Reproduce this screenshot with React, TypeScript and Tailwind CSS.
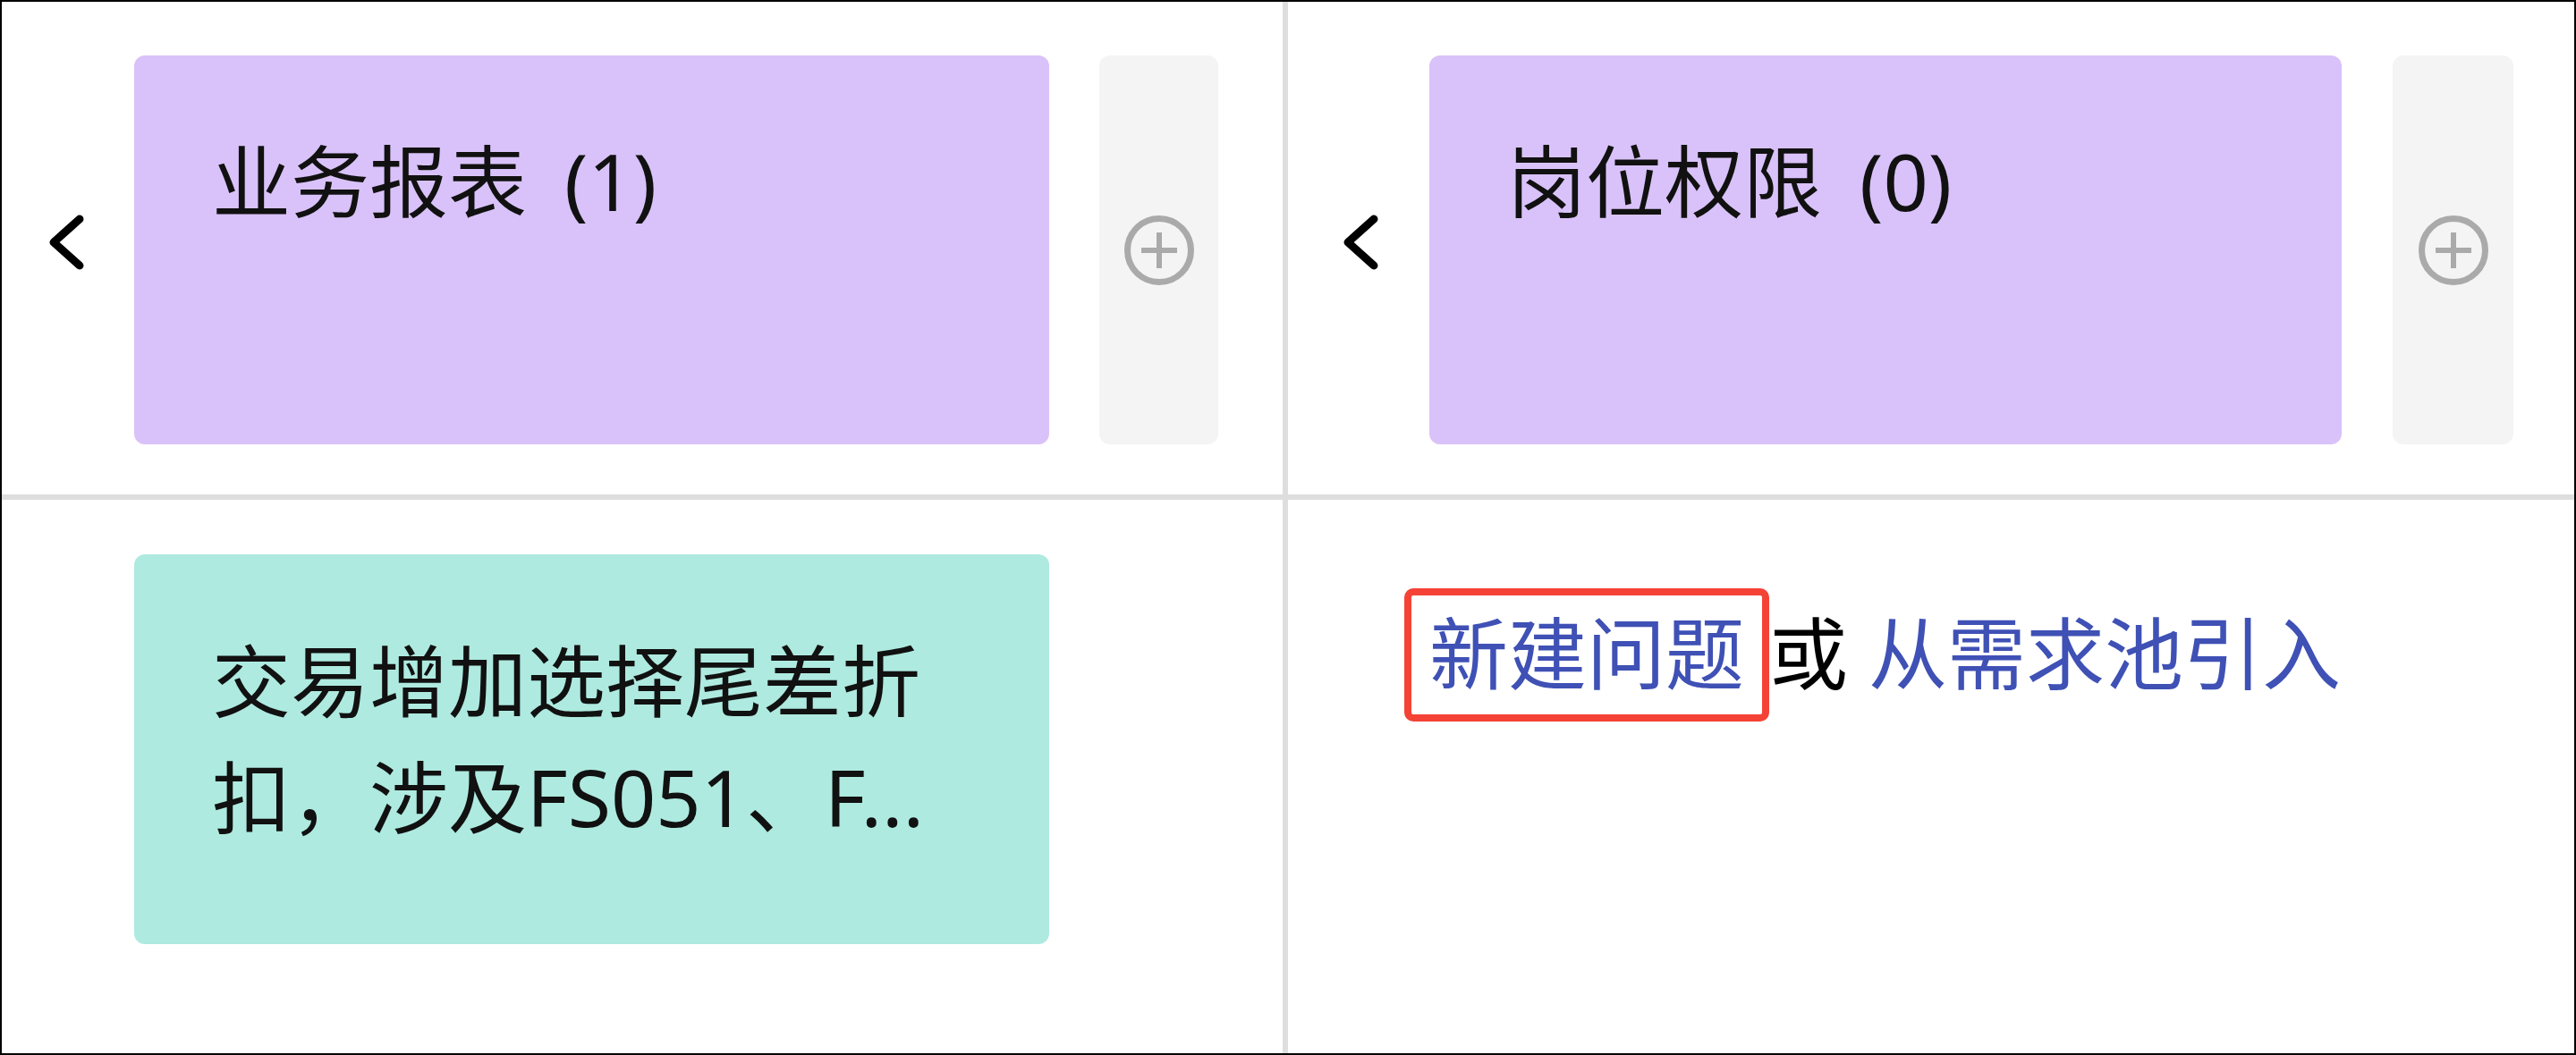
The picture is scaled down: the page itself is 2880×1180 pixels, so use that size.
import React from "react";

const font = { fontFamily: '"Noto Sans", "Noto Sans CJK SC", sans-serif' };

function Chevron() {
    return (
        <svg width="40" height="62" viewBox="0 0 40 62" fill="none" className="block">
            <path d="M34 5 L5 31 L34 57" stroke="#000" strokeWidth="9" strokeLinecap="round" strokeLinejoin="round" />
        </svg>
    );
}

function PlusCircle() {
    return (
        <svg width="80" height="80" viewBox="0 0 80 80" fill="none" className="block">
            <circle cx="40" cy="40" r="35.5" stroke="#aaaaaa" strokeWidth="7" />
            <path d="M20 40 H60 M40 20 V60" stroke="#aaaaaa" strokeWidth="6" />
        </svg>
    );
}

function GroupCell({ name, count, chevronPad, cardOffset, cardWidth, gap, addWidth, className }: {
    name: string;
    count: number;
    chevronPad: string;
    cardOffset: string;
    cardWidth: string;
    gap: string;
    addWidth: string;
    className: string;
}) {
    return (
        <div className={className}>
            <div className={`flex items-start pt-[60px] ${gap}`}>
                {/* collapse arrow */}
                <div className={`h-[435px] flex items-center pb-[18px] ${chevronPad} ${cardOffset}`}>
                    <Chevron />
                </div>
                <div className={`h-[435px] ${cardWidth} rounded-[12px] bg-[#d9c2f9] px-[87px] pt-[75px] text-[88px] leading-[130px] text-[#111]`}>
                    {name}
                    <span className="ml-[42px]">({count})</span>
                </div>
                <div className={`h-[435px] ${addWidth} rounded-[12px] bg-[#f4f4f4] flex items-center justify-center`}>
                    <PlusCircle />
                </div>
            </div>
        </div>
    );
}

export default function App() {
    return (
        <div className="w-[2880px] h-[1180px] border-2 border-black bg-white overflow-hidden" style={font}>
            <div className="grid grid-cols-[1438px_1438px] grid-rows-[557px_619px]">
                {/* top row: groups */}
                <GroupCell
                    name="业务报表"
                    count={1}
                    className="border-r-[6px] border-b-[6px] border-[#dedede]"
                    chevronPad="pl-[53px]"
                    cardOffset="w-[148px]"
                    cardWidth="w-[1023px]"
                    gap="gap-0 [&>*:nth-child(3)]:ml-[56px]"
                    addWidth="w-[133px]"
                />
                <GroupCell
                    name="岗位权限"
                    count={0}
                    className="border-b-[6px] border-[#dedede]"
                    chevronPad="pl-[62px]"
                    cardOffset="w-[158px]"
                    cardWidth="w-[1020px]"
                    gap="gap-0 [&>*:nth-child(3)]:ml-[57px]"
                    addWidth="w-[135px]"
                />

                {/* bottom row: items */}
                <div className="border-r-[6px] border-[#dedede] pt-[61px] pl-[148px]">
                    <div className="w-[1023px] h-[436px] rounded-[12px] bg-[#aeeae0] px-[87px] pt-[76px] text-[88px] leading-[130px] text-[#111]">
                        交易增加选择尾差折扣，涉及FS051、F...
                    </div>
                </div>
                <div className="pt-[99px] pl-[130px]">
                    <p className="text-[88px] leading-[106px] text-black whitespace-nowrap">
                        <span className="inline-block border-[8px] border-[#f44336] rounded-[10px] px-[20px] pt-[11px] pb-[16px] text-[#3f51b5]">
                            新建问题
                        </span>
                        或 <span className="text-[#3f51b5]">从需求池引入</span>
                    </p>
                </div>
            </div>
        </div>
    );
}
